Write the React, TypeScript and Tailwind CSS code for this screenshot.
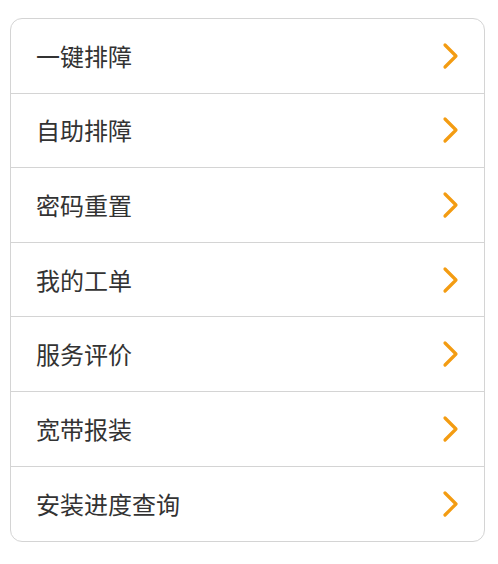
import React from "react";

const items = ["一键排障", "自助排障", "密码重置", "我的工单", "服务评价", "宽带报装", "安装进度查询"];

function Chevron() {
  return (
    <svg width="18" height="28" viewBox="0 0 18 28" fill="none">
      <path d="M3 3 L14 14 L3 25" stroke="#f39c12" strokeWidth="3.2" strokeLinecap="round" strokeLinejoin="round" />
    </svg>
  );
}

export default function App() {
  return (
    <div className="w-[498px] h-[564px] bg-white pt-[18px] pl-[10px] pr-[13px]" style={{ fontFamily: '"Noto Sans CJK SC", "Noto Sans", sans-serif' }}>
      <div className="border border-[#d4d4d4] rounded-[12px] flex flex-col divide-y divide-[#d4d4d4]">
        {items.map((t) => (
          <div key={t} className="h-[74.6px] flex items-center justify-between pl-[25px] pr-[24px]">
            <span className="text-[24px] text-[#333333] leading-none">{t}</span>
            <Chevron />
          </div>
        ))}
      </div>
    </div>
  );
}
